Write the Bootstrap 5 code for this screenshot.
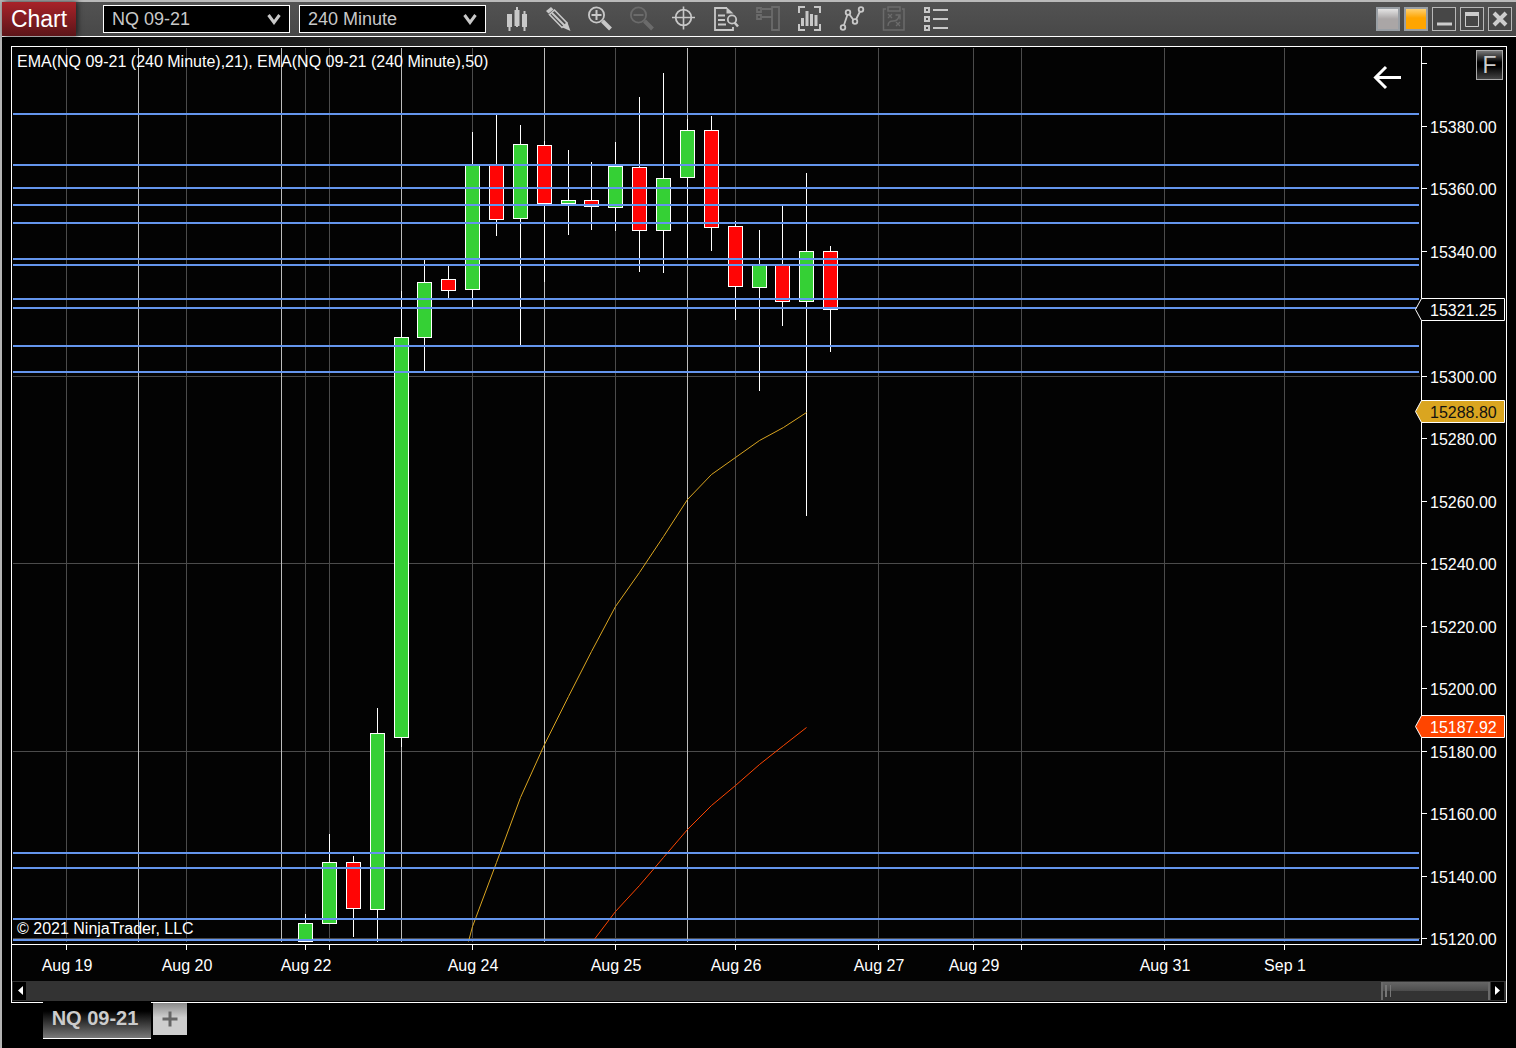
<!DOCTYPE html>
<html lang="en">
<head>
<meta charset="utf-8">
<meta name="viewport" content="width=device-width, initial-scale=1">
<title>Chart - NQ 09-21</title>
<link href="https://cdn.jsdelivr.net/npm/bootstrap@5.3.0/dist/css/bootstrap.min.css" rel="stylesheet">
<style>
body{background:#000;color:#fff;font-family:"Liberation Sans",Arial,sans-serif;font-size:16px;line-height:20px}
.window{min-height:100vh;border-left:2px solid #b4b4b4;border-top:2px solid #bababa}
.titlebar{height:35px;background:linear-gradient(#525252,#484848);border-bottom:1px solid #fff}
.app-name{width:74px;font-size:23px;line-height:34px;background:linear-gradient(#a82329,#5c1519);box-shadow:2px 0 5px #222}
.pickers{gap:9px;padding-top:3px;margin-left:27px}
.picker{width:187px;height:28px;padding:0 30px 0 8px;border:1px solid #fff;border-radius:0;color:#c8c8c8;font-size:18px;line-height:26px;background:#000 url("data:image/svg+xml,%3Csvg xmlns='http://www.w3.org/2000/svg' viewBox='0 0 14 12'%3E%3Cpath d='M1.5 2L7 9.500L12.500 2' fill='none' stroke='%23c8c8c8' stroke-width='3'/%3E%3C/svg%3E") no-repeat right 8px center/14px 12px}
.picker:focus{background-color:#000;color:#c8c8c8;border-color:#fff;box-shadow:none}
.tools{margin-left:10px}
.tool{width:42px;height:34px;color:#c8c8c8}
.tool:disabled{color:#6b6b6b}
.tool svg{display:block;fill:none;stroke:currentColor}
.win-controls{padding:5px 4px 0 0}
.win-btn{width:24px;height:24px;border:1px solid #b8b8b8;color:#ccc;background:#474747}
.win-btn svg{display:block;width:22px;height:22px}
.swatch-gray{background:linear-gradient(#e4e4e4,#aaa6a6 50%);border:2px solid #999fa5}
.swatch-gold{background:linear-gradient(#ffd070,#ffa500 45%);border:2px solid #999fa5}
.workspace{padding:9px 9px 0;background:radial-gradient(ellipse 760px 260px at 50% 0,#4a4a4a,#000)}
.chart-frame{border:1px solid #fff;background:#030303}
.chart-frame svg.plot{display:block;width:100%;height:auto;font-family:"Liberation Sans",Arial,sans-serif;font-size:16px}
.fixed-scale{top:3px;right:3px;width:27px;height:30px;border:1px solid #aaa;color:#ccc;font-size:23px;line-height:26px;background:linear-gradient(#777,#000 40%,#000 55%,#444)}
.go-back{top:18px;right:104px;width:30px;height:26px}
.scroller{height:21px;padding:1px 2px 1px 1px;background:#333;border-bottom:1px solid #000}
.scroll-arrow{width:13px;background:#000}
.scroll-arrow svg{display:block}
.thumb{width:109px;margin-right:1px;border:1px solid #6a6a6a;border-width:0 2px;background:linear-gradient(#666,#4c4c4c 50%,#333 50%)}
.thumb i{width:6px;height:12px;margin:3px 2px;border:1px solid #777;border-width:0 1px 0 2px}
.tab-row{margin-top:-1px;padding-left:32px;gap:2px}
.chart-tab{width:108px;height:37px;padding:1px 4px 0 0;color:#ccc;font-weight:700;font-size:20px;line-height:30px;background:linear-gradient(#000 25%,#7a7a7a);border-bottom:1px solid #fff}
.add-tab{width:34px;height:32px;margin-top:1px;background:linear-gradient(#8a8a8a,#cecece 45%)}
</style>
</head>
<body>
<div class="window d-flex flex-column">
<header class="titlebar d-flex align-items-start">
  <div class="app-name text-center">Chart</div>
  <form class="pickers d-flex">
    <select class="form-select picker" aria-label="Instrument"><option>NQ 09-21</option></select>
    <select class="form-select picker" aria-label="Interval"><option>240 Minute</option></select>
  </form>
  <nav class="tools d-flex" aria-label="Chart tools">
    <button class="tool border-0 bg-transparent p-0" aria-label="Chart style"><svg width="42" height="34"><path d="M13.500 12v17M21 5v20M28.500 9v20" stroke-width="2"/><path d="M11 12h5v13h-5zM18.500 8h5v16h-5zM26 12h5v13h-5z" fill="currentColor" stroke="none"/></svg></button>
    <button class="tool border-0 bg-transparent p-0" aria-label="Drawing tools"><svg width="42" height="34"><path d="M8 9l5-4 2.500 2.500-5 4z" fill="currentColor" stroke="none"/><path d="M11.500 12.500l5-4.500 12.500 13-5 4.500z" stroke-width="1.600"/><path d="M14 11l12.500 12.500" stroke-width="2"/><path d="M24.500 25.500l5-5L32.500 29z" fill="currentColor" stroke="none"/></svg></button>
    <button class="tool border-0 bg-transparent p-0" aria-label="Zoom in"><svg width="42" height="34"><circle cx="16.500" cy="13" r="7.600" stroke-width="1.800"/><path d="M11.500 13h10M16.500 8v10" stroke-width="2"/><path d="M22.500 19l8 8" stroke-width="4"/></svg></button>
    <button class="tool border-0 bg-transparent p-0" aria-label="Zoom out" disabled><svg width="42" height="34"><circle cx="16.500" cy="13" r="7.600" stroke-width="1.800"/><path d="M11.500 13h10" stroke-width="2"/><path d="M22.500 19l8 8" stroke-width="4"/></svg></button>
    <button class="tool border-0 bg-transparent p-0" aria-label="Crosshair"><svg width="42" height="34"><circle cx="19.500" cy="15.500" r="7.800" stroke-width="1.800"/><path d="M8 15.500h23M19.500 4.500v23" stroke-width="1.600"/></svg></button>
    <button class="tool border-0 bg-transparent p-0" aria-label="Data box"><svg width="42" height="34"><path d="M27 25v3H9V6h12M12 13.500h7M12 18h7M12 22.500h8" stroke-width="1.800"/><path d="M20.500 5l7 6.500h-7z" fill="currentColor" stroke="none"/><circle cx="26" cy="17.500" r="4.200" stroke-width="1.800"/><path d="M28.500 20.500l3.500 4" stroke-width="2.500"/></svg></button>
    <button class="tool border-0 bg-transparent p-0" aria-label="Chart trader" disabled><svg width="42" height="34"><path d="M9 6h4v4H9zM9 13h4v4H9zM14 7h10M14 15h10M24 5h7v23h-7z" stroke-width="1.800"/></svg></button>
    <button class="tool border-0 bg-transparent p-0" aria-label="Indicators"><svg width="42" height="34"><path d="M15 5H9v6M24 5h6v6M15 28H9v-6M24 28h6v-6" stroke-width="2"/><path d="M11 16h3v8h-3zM15.500 9h3v15h-3zM20 12h3v12h-3zM24.500 13h3v11h-3z" fill="currentColor" stroke="none"/></svg></button>
    <button class="tool border-0 bg-transparent p-0" aria-label="Strategies"><svg width="42" height="34"><path d="M12 23l3.500-10.500M17.500 12.500l4 5.500M24 17.500l4-8" stroke-width="1.800"/><g stroke-width="1.800"><circle cx="11" cy="25.500" r="2.300"/><circle cx="16" cy="10.500" r="2.300"/><circle cx="23" cy="19.500" r="2.300"/><circle cx="29" cy="7.500" r="2.300"/></g></svg></button>
    <button class="tool border-0 bg-transparent p-0" aria-label="Strategy notes" disabled><svg width="42" height="34"><path d="M12 7H9.500v21H30V7H28M14 5h12v4H14z" stroke-width="1.500"/><path d="M14 12l4 4M18 12l-4 4M22 20l4 4M26 20l-4 4M14 24q0-5 5-5t6-5M21.500 13H26v4.500" stroke-width="1.300"/></svg></button>
    <button class="tool border-0 bg-transparent p-0" aria-label="Properties"><svg width="42" height="34"><path d="M9 6h4v4H9zM9 15h4v4H9zM9 24h4v4H9zM17 8h15M17 17h15M17 26h15" stroke-width="2"/></svg></button>
  </nav>
  <div class="win-controls d-flex ms-auto gap-1">
    <button class="win-btn swatch-gray p-0" aria-label="Instrument link"></button>
    <button class="win-btn swatch-gold p-0" aria-label="Interval link"></button>
    <button class="win-btn p-0" aria-label="Minimize"><svg><path d="M4 16h15" stroke="currentColor" stroke-width="3"/></svg></button>
    <button class="win-btn p-0" aria-label="Maximize"><svg fill="none" stroke="currentColor"><path d="M4.500 4v14.500h13V4"/><path d="M4 6h14" stroke-width="4"/></svg></button>
    <button class="win-btn p-0" aria-label="Close"><svg><path d="M5 5l12 12M17 5L5 17" stroke="currentColor" stroke-width="4"/></svg></button>
  </div>
</header>
<main class="workspace">
  <section class="chart-frame position-relative">
    <svg class="plot" id="plot" viewBox="12 47 1494 934" role="img" aria-label="NQ 09-21 240 minute candlestick chart"></svg>
    <button class="go-back position-absolute border-0 bg-transparent p-0" aria-label="Scroll back"><svg class="d-block" width="30" height="26"><path d="M29 12.500H4M14 2L3.500 12.500 14 23" fill="none" stroke="#fff" stroke-width="3"/></svg></button>
    <button class="fixed-scale position-absolute p-0">F</button>
    <div class="scroller d-flex" role="group" aria-label="Time scroll">
      <button class="scroll-arrow border-0 p-0" aria-label="Earlier"><svg width="13" height="18"><path d="M10 4v9L5 8.500z" fill="#fff"/></svg></button>
      <div class="thumb ms-auto d-flex"><i></i></div>
      <button class="scroll-arrow border-0 p-0" aria-label="Later"><svg width="13" height="18"><path d="M4 4v9l5-4.500z" fill="#fff"/></svg></button>
    </div>
  </section>
  <nav class="tab-row d-flex position-relative" aria-label="Chart tabs">
    <a href="#" class="chart-tab text-center text-decoration-none">NQ 09-21</a>
    <button class="add-tab border-0 p-0" aria-label="Add tab"><svg class="d-block mx-auto" width="16" height="16"><path d="M0.500 8h15M8 0.500v15" stroke="#666" stroke-width="3"/></svg></button>
  </nav>
</main>
</div>
<script>
const NS = 'http://www.w3.org/2000/svg', plot = document.getElementById('plot');
function add(tag, attrs, text) {
  const el = document.createElementNS(NS, tag);
  for (const k in attrs) el.setAttribute(k, attrs[k]);
  if (text !== undefined) el.textContent = text;
  plot.appendChild(el);
}
const box = (x, y, width, height, fill) => add('rect', {x, y, width, height, fill, 'shape-rendering': 'crispEdges'});
const label = (x, y, text, fill = '#fff', anchor = 'start') => add('text', {x, y, fill, 'text-anchor': anchor}, text);

// grid: days are dim, session breaks are bright
const days = [66, 186, 305, 329, 472, 615, 735, 878, 973, 1021, 1164, 1284];
days.forEach(x => box(x, 48, 1, 894, '#4b4b4b'));
[376, 563, 751, 938].forEach(y => box(13, y, 1407, 1, '#4b4b4b'));
[138, 281, 401, 544, 687].forEach(x => box(x, 48, 1, 894, '#bdbdbd'));

// candles: centre, high, low, body top, body bottom, rising
[[305,914,942,923,942,1],[329,834,924,862,924,1],[353,856,937,862,909,0],[377,708,942,733,910,1],
 [401,291,747,337,738,1],[424,260,371,282,338,1],[448,265,298,279,291,0],[472,132,307,164,290,1],
 [496,114,236,164,220,0],[520,125,346,144,219,1],[544,141,282,145,204,0],[568,150,235,200,204,1],
 [591,162,230,200,207,0],[615,142,231,166,208,1],[639,97,272,167,231,0],[663,73,273,178,231,1],
 [687,119,260,130,178,1],[711,116,251,130,228,0],[735,221,320,226,287,0],[759,230,391,264,288,1],
 [782,205,326,264,302,0],[806,173,516,251,302,1],[830,246,352,251,310,0]
].forEach(([c, hi, lo, top, bottom, up]) => {
  box(c, hi, 1, lo - hi, '#fff');
  box(c - 7, top, 15, bottom - top, '#fff');
  box(c - 6, top + 1, 13, bottom - top - 2, up ? '#35d035' : '#ff0505');
});

// moving averages, centred on the pixel grid
const line = (points, stroke) => add('polyline', {points, stroke, fill: 'none', 'stroke-width': 1, transform: 'translate(.5 .5)'});
line('468,941 472,926 496,862 520,797 544,744 568,696 591,651 615,606 639,572 663,536 687,499 711,474 735,457 759,440 783,427 806,412', '#daa520');
line('593,940 615,911 639,885 663,857 687,829 711,805 735,785 759,764 783,745 806,727', '#ff4500');

// support and resistance levels
[113,164,187,204,222,258,264,298,307,345,371,852,867,918,939].forEach(y => box(13, y, 1406, 2, '#6495ed'));

// axes
box(1421, 47, 1, 898, '#fff');
box(12, 944, 1410, 1, '#fff');
days.forEach(x => box(x, 945, 1, 5, '#fff'));
[[66,'Aug 19'],[186,'Aug 20'],[305,'Aug 22'],[472,'Aug 24'],[615,'Aug 25'],[735,'Aug 26'],[878,'Aug 27'],[973,'Aug 29'],[1164,'Aug 31'],[1284,'Sep 1']]
  .forEach(([x, t]) => label(x + 1, 971, t, '#fff', 'middle'));
for (let i = 0; i < 15; i++) {
  const price = 15400 - i * 20, y = Math.round(63 + i * 62.5);
  if (price === 15320) continue;
  box(1422, y, 5, 1, '#fff');
  if (i) label(1430, y + 7, price.toFixed(2));
}
[[309,'#030303','#fff','15321.25'],[411,'#daa520','#111','15288.80'],[726,'#ff4500','#fff','15187.92']].forEach(([y, fill, ink, t]) => {
  add('path', {d: `M1421.5 ${y - 10.5}H1504.5V${y + 11.5}H1421.5L1415.5 ${y + .5}Z`, fill, stroke: '#fff'});
  label(1430, y + 7, t, ink);
});
label(17, 67, 'EMA(NQ 09-21 (240 Minute),21), EMA(NQ 09-21 (240 Minute),50)');
label(17, 934, '© 2021 NinjaTrader, LLC');
</script>
<script src="https://cdn.jsdelivr.net/npm/bootstrap@5.3.0/dist/js/bootstrap.bundle.min.js"></script>
</body>
</html>
